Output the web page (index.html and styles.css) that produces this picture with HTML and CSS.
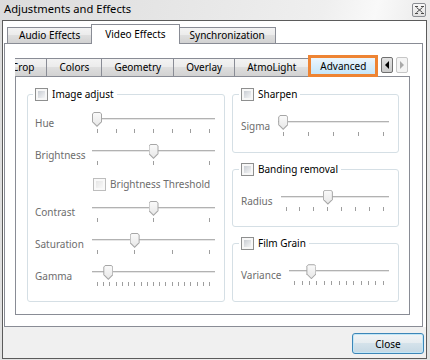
FILE: index.html
```html
<!DOCTYPE html>
<html lang="en">
<head>
	<meta charset="utf-8">
	<title>Adjustments and Effects</title>
	<link rel="stylesheet" href="styles.css">
</head>
<body>
	<div class="window">
		<div class="titleBar">
			<span class="title">Adjustments and Effects</span>
			<span class="winClose">
				<svg width="9" height="8" viewBox="0 0 9 8"><path d="M1.5 1.5 L7.5 6.5 M7.5 1.5 L1.5 6.5 M0 0.5 H3 M6 0.5 H9 M0 7.5 H3 M6 7.5 H9" stroke="#4b4b4b" stroke-width="1" fill="none"/></svg>
			</span>
		</div>
		<div class="frame">
			<div class="content">
				<div class="tabBar">
					<div class="tab">Audio Effects</div>
					<div class="tab active">Video Effects</div>
					<div class="tab">Synchronization</div>
				</div>
				<div class="pane">
					<div class="subBar">
						<div class="subTabs">
							<div class="subTab crop">Crop</div>
							<div class="subTab">Colors</div>
							<div class="subTab">Geometry</div>
							<div class="subTab">Overlay</div>
							<div class="subTab">AtmoLight</div>
							<div class="subTab active">Advanced</div>
						</div>
						<div class="scroller">
							<span class="arrow"><svg width="4" height="8" viewBox="0 0 4 8"><path d="M4 0 V8 L0 4 Z" fill="#000"/></svg></span>
							<span class="arrow off"><svg width="4" height="8" viewBox="0 0 4 8"><path d="M0 0 V8 L4 4 Z" fill="#a9a9a9"/></svg></span>
						</div>
					</div>
					<div class="subPane">
						<!-- Image adjust -->
						<fieldset class="group imageGroup">
							<legend><span class="check"></span>Image adjust</legend>
							<div class="rows">
								<span class="lbl">Hue</span>
								<div class="slider" style="--v:0">
									<div class="groove"></div>
									<div class="ticks"><i></i><i></i><i></i><i></i><i></i><i></i><i></i></div>
									<span class="thumb"></span>
								</div>

								<span class="lbl">Brightness</span>
								<div class="slider" style="--v:0.5">
									<div class="groove"></div>
									<div class="ticks"><i></i><i></i><i></i></div>
									<span class="thumb"></span>
								</div>

								<div class="subCheck"><span class="check off"></span>Brightness Threshold</div>

								<span class="lbl">Contrast</span>
								<div class="slider" style="--v:0.5">
									<div class="groove"></div>
									<div class="ticks"><i></i><i></i><i></i></div>
									<span class="thumb"></span>
								</div>

								<span class="lbl">Saturation</span>
								<div class="slider" style="--v:0.333">
									<div class="groove"></div>
									<div class="ticks"><i></i><i></i><i></i><i></i></div>
									<span class="thumb"></span>
								</div>

								<span class="lbl">Gamma</span>
								<div class="slider" style="--v:0.1">
									<div class="groove"></div>
									<div class="ticks"><i></i><i></i><i></i><i></i><i></i><i></i><i></i><i></i><i></i><i></i><i></i><i></i><i></i><i></i><i></i><i></i><i></i><i></i><i></i></div>
									<span class="thumb"></span>
								</div>
							</div>
						</fieldset>

						<div class="stack">
							<fieldset class="group">
								<legend><span class="check"></span>Sharpen</legend>
								<div class="row">
									<span class="lbl">Sigma</span>
									<div class="slider" style="--v:0">
										<div class="groove"></div>
										<div class="ticks"><i></i><i></i><i></i><i></i><i></i></div>
										<span class="thumb"></span>
									</div>
								</div>
							</fieldset>

							<fieldset class="group">
								<legend><span class="check"></span>Banding removal</legend>
								<div class="row">
									<span class="lbl">Radius</span>
									<div class="slider" style="--v:0.43">
										<div class="groove"></div>
										<div class="ticks"><i></i><i></i><i></i><i></i><i></i><i></i><i></i><i></i></div>
										<span class="thumb"></span>
									</div>
								</div>
							</fieldset>

							<fieldset class="group">
								<legend><span class="check"></span>Film Grain</legend>
								<div class="row">
									<span class="lbl">Variance</span>
									<div class="slider" style="--v:0.19">
										<div class="groove"></div>
										<div class="ticks"><i></i><i></i><i></i><i></i><i></i><i></i><i></i><i></i><i></i><i></i><i></i><i></i><i></i></div>
										<span class="thumb"></span>
									</div>
								</div>
							</fieldset>
						</div>
					</div>
				</div>
			</div>
			<div class="buttons">
				<button class="closeBtn" type="button">Close</button>
			</div>
		</div>
	</div>
</body>
</html>
```

FILE: styles.css
```css
*, *:after, *:before {
	box-sizing: border-box;
}
html, body {
	margin: 0;
	padding: 0;
}
body {
	width: 430px;
	height: 360px;
	overflow: hidden;
	font-family: "Noto Sans", "Open Sans", sans-serif;
	font-size: 10px;
	color: #000;
}
.window {
	width: 430px;
	height: 360px;
	display: flex;
	flex-direction: column;
	background: linear-gradient(105deg, #dcdcdc 0%, #e8e8e8 40%, #efefef 62%, #f9f9f9 72%, #ebebeb 82%, #e1e1e1 100%);
}

/* title bar */
.titleBar {
	height: 20px;
	display: flex;
	justify-content: space-between;
	align-items: flex-start;
	padding: 0 4px;
}
.title {
	font-size: 11.2px;
	line-height: 16px;
	margin-top: 1px;
}
.winClose {
	width: 14px;
	height: 14px;
	margin-top: 3px;
	border: 1px solid #8a8d92;
	border-radius: 2px;
	background: linear-gradient(#f8f8f8, #e2e2e2);
	display: flex;
	align-items: center;
	justify-content: center;
}

/* dialog frame */
.frame {
	height: 339px;
	margin: 0 3px 0 2px;
	border: 1px solid #5b5b5b;
	display: flex;
	flex-direction: column;
}
.content {
	height: 306px;
	background: #fff;
	padding: 0 3px 0 1px;
}

/* main tabs */
.tabBar {
	height: 22px;
	display: flex;
	align-items: flex-end;
	padding-left: 3px;
	position: relative;
	z-index: 1;
}
.tab {
	height: 16px;
	padding: 0 10px;
	margin-left: -1px;
	border: 1px solid #898c95;
	border-bottom: none;
	line-height: 15px;
	background: linear-gradient(#f3f3f3, #ebebeb 50%, #dedede 50%, #d2d2d2);
}
.tab:first-child {
	margin-left: 0;
	padding: 0 11px;
}
.tab.active {
	height: 20px;
	margin-bottom: -1px;
	padding: 0 13px;
	line-height: 18px;
	background: #fff;
}
.pane {
	height: 284px;
	border: 1px solid #898c95;
	padding: 11px 12px 11px 10px;
	display: flex;
	flex-direction: column;
}

/* sub tabs */
.subBar {
	height: 22px;
	margin-bottom: -1px;
	display: flex;
	position: relative;
	z-index: 1;
}
.subTabs {
	flex: 1;
	display: flex;
	align-items: flex-start;
	overflow: hidden;
}
.subTab {
	flex: none;
	height: 18px;
	margin-top: 3px;
	margin-left: -1px;
	padding: 0 12px;
	border: 1px solid #898c95;
	border-bottom: none;
	line-height: 16px;
	white-space: nowrap;
	background: linear-gradient(#f3f3f3, #ebebeb 50%, #dedede 50%, #d2d2d2);
}
.subTab.crop {
	margin-left: -16px;
}
.subTab.active {
	height: 22px;
	margin-top: 0;
	padding: 0 9px;
	border: 3px solid #ee8433;
	line-height: 16px;
	background: linear-gradient(#ecf6fd, #c6e5f8);
}
.scroller {
	flex: none;
	display: flex;
	gap: 3px;
	margin: 2px 2px 0 3px;
}
.arrow {
	width: 12px;
	height: 16px;
	border: 1px solid #707070;
	border-radius: 2px;
	background: linear-gradient(#e2e2e2, #cbcbcb);
	display: flex;
	align-items: center;
	justify-content: center;
}
.arrow.off {
	border-color: #c6c6c6;
	background: #f4f4f4;
}
.subPane {
	height: 239px;
	border: 1px solid #898c95;
	padding: 11px 10px 12px 11px;
	display: flex;
	gap: 7px;
	background: #fff;
}

/* group boxes */
.group {
	margin: 0;
	min-width: 0;
	border: 1px solid #d5dfe5;
	border-radius: 3px;
	padding: 14px 9px 0 8px;
}
.group legend {
	display: flex;
	align-items: center;
	gap: 4px;
	margin-left: -2px;
	padding: 0 3px 0 2px;
	line-height: 13px;
}
.imageGroup {
	width: 198px;
	padding: 11px 9px 0 7px;
}
.stack {
	width: 167px;
	display: flex;
	flex-direction: column;
	gap: 10px;
}
.stack .group {
	flex: 1;
}
.check {
	width: 13px;
	height: 13px;
	flex: none;
	padding: 2px;
	border: 1px solid #8e8f8f;
	background: linear-gradient(135deg, #c9cdd3, #f4f5f6) content-box, #f7f7f7;
}
.check.off {
	border-color: #bdbdbd;
	background: linear-gradient(135deg, #e6e6e6, #f8f8f8) content-box, #f9f9f9;
}
.rows {
	display: grid;
	grid-template-columns: 57px 1fr;
	row-gap: 10px;
	align-items: center;
}
.row {
	display: flex;
	align-items: center;
	gap: 8px;
}
.lbl {
	color: #6d6d6d;
	white-space: nowrap;
}
.subCheck {
	grid-column: 2;
	display: flex;
	align-items: center;
	gap: 4px;
	margin: 2px 0 0 1px;
	line-height: 13px;
	color: #6d6d6d;
}

/* sliders */
.slider {
	flex: 1;
	position: relative;
	height: 22px;
}
.groove {
	margin-top: 6px;
	height: 2px;
	background: linear-gradient(#b2b2b2 50%, #e6e6e6 50%);
}
.ticks {
	display: flex;
	justify-content: space-between;
	padding: 0 5px;
	margin-top: 9px;
}
.ticks i {
	width: 1px;
	height: 4px;
	background: #9e9e9e;
}
.thumb {
	position: absolute;
	top: 0;
	left: calc(var(--v) * (100% - 10px));
	width: 10px;
	height: 15px;
	background: #a6a6a6;
	clip-path: polygon(0 2px, 2px 0, 8px 0, 10px 2px, 10px 10px, 5px 15px, 0 10px);
}
.thumb:after {
	content: "";
	position: absolute;
	inset: 0;
	background: linear-gradient(#fbfbfb, #e6e6e6);
	clip-path: polygon(1px 2px, 2px 1px, 8px 1px, 9px 2px, 9px 9.6px, 5px 13.6px, 1px 9.6px);
}

/* bottom buttons */
.buttons {
	flex: 1;
	background: #f0f0f0;
	display: flex;
	justify-content: flex-end;
	align-items: flex-start;
	padding: 6px 2px 0 0;
}
.closeBtn {
	width: 72px;
	height: 21px;
	padding: 0;
	border: 1px solid #3c86b8;
	border-radius: 3px;
	font-family: inherit;
	font-size: 10px;
	color: #000;
	background: linear-gradient(#f1f4f6, #e5ecf0 50%, #d4e2ea 50%, #c5d8e4);
	box-shadow: inset 0 0 0 1px #c2e6f6;
}
```
